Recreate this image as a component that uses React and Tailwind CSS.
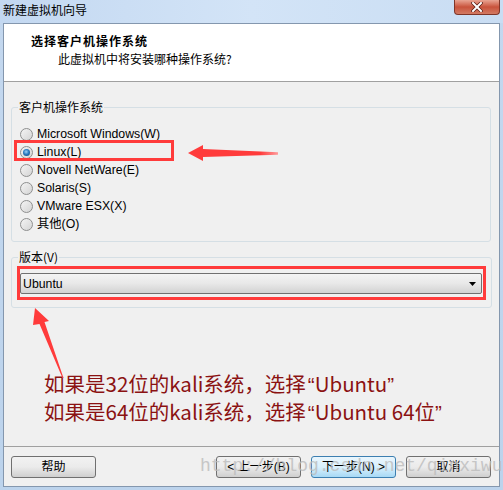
import React from "react";

const ui = { fontFamily: '"Liberation Sans", "Noto Sans CJK SC", sans-serif' };
const cjk = { fontFamily: '"Noto Sans CJK SC", "Liberation Sans", sans-serif' };
const q = { fontFamily: '"Liberation Sans", sans-serif' };

const oses = [
  "Microsoft Windows(W)",
  "Linux(L)",
  "Novell NetWare(E)",
  "Solaris(S)",
  "VMware ESX(X)",
  "其他(O)",
];

function Radio({ checked }) {
  return (
    <span className="relative flex h-[13px] w-[13px] items-center justify-center rounded-full border border-[#8e8f8f] bg-gradient-to-br from-[#f4f4f4] to-[#d4d4d4]">
      {checked && (
        <span className="h-[7px] w-[7px] rounded-full bg-[radial-gradient(circle_at_45%_40%,#9fd4f8_0%,#2a7cc2_45%,#0f3f73_100%)]" />
      )}
    </span>
  );
}

function Button({ children, primary }) {
  return (
    <div
      className={
        "flex h-[22px] w-[85px] items-center justify-center rounded-[3px] border text-[12px] text-black " +
        (primary
          ? "border-[#3c7fb1] bg-gradient-to-b from-[#eaf6fd] via-[#d9f0fc] to-[#a7d9f5]"
          : "border-[#707070] bg-gradient-to-b from-[#f2f2f2] via-[#ebebeb] to-[#cfcfcf]")
      }
      style={ui}
    >
      {children}
    </div>
  );
}

export default function App() {
  return (
    <div className="relative flex h-[490px] w-[503px] flex-col overflow-hidden bg-gradient-to-b from-[#c4d8ef] to-[#bcd3ec]" style={ui}>
      {/* title bar */}
      <div className="flex h-[23px] shrink-0 items-start justify-between bg-gradient-to-r from-[#c3d8f1] via-[#d3e4f7] to-[#c9ddf3] pl-[3px]">
        <span className="mt-[2px] text-[12px] leading-[16px] text-black" style={cjk}>新建虚拟机向导</span>
        <div className="mr-[3px] flex h-[15px] w-[46px] items-center justify-center rounded-b-[4px] border border-t-0 border-[#7f3528] bg-gradient-to-b from-[#e8a493] via-[#c8523b] to-[#d27a63]">
          <svg width="12" height="10" viewBox="0 0 12 10">
            <path d="M2 1 L10 9 M10 1 L2 9" stroke="#5a1e14" strokeWidth="3.4" strokeLinecap="square" />
            <path d="M2 1 L10 9 M10 1 L2 9" stroke="#fff" strokeWidth="2" strokeLinecap="square" />
          </svg>
        </div>
      </div>

      {/* panel */}
      <div className="mx-[3px] mb-[3px] flex flex-1 flex-col border border-[#8497ae] bg-[#f0f0f0]">
        <div className="h-[58px] shrink-0 border-b border-[#a0a0a0] bg-white pl-[27px] pt-[9px]">
          <div className="text-[12px] font-bold leading-[16px] tracking-[1px] text-black" style={cjk}>选择客户机操作系统</div>
          <div className="mt-[2px] pl-[27px] text-[12px] leading-[16px] text-black" style={cjk}>此虚拟机中将安装哪种操作系统?</div>
        </div>

        <fieldset className="ml-[7px] mt-[17px] w-[480px] rounded-[3px] border border-[#d5dfe5] px-[6px] pb-[8px]">
          <legend className="px-[1px] text-[12px] leading-[16px] text-black" style={cjk}>客户机操作系统</legend>
          <div className="flex flex-col pt-[10px]">
            {oses.map((o, i) => (
              <div key={o} className="flex h-[18px] items-center gap-[4px] pl-[2px]">
                <Radio checked={i === 1} />
                <span className="text-[12.3px] leading-[16px] text-black">{o}</span>
              </div>
            ))}
          </div>
        </fieldset>

        <fieldset className="ml-[7px] mt-[7px] w-[480px] rounded-[3px] border border-[#d5dfe5] px-[5px] pb-[7px]">
          <legend className="ml-[1px] px-[1px] text-[12px] leading-[16px] text-black" style={cjk}>版本(V)</legend>
          <div className="mt-[1px] w-[469px] border-[3px] border-[#ff3b3b] pb-[3px] pl-0 pr-[1px] pt-[4px]">
            <div className="flex h-[21px] items-center justify-between rounded-[2px] border border-[#707070] bg-gradient-to-b from-[#f4f4f4] via-[#e8e8e8] to-[#d2d2d2] pl-[2px] pr-[5px]">
              <span className="text-[12.3px] leading-[16px] text-black">Ubuntu</span>
              <svg width="7" height="4" viewBox="0 0 7 4">
                <path d="M0 0 H7 L3.5 4 Z" fill="#000" />
              </svg>
            </div>
          </div>
        </fieldset>

        <div className="ml-[40px] mt-[62px] text-[20.5px] leading-[27px] text-[#8b1212]" style={cjk}>
          <div>如果是32位的kali系统，选择<span style={q} className="pl-[2px]">“</span>Ubuntu<span style={q}>”</span></div>
          <div>如果是64位的kali系统，选择<span style={q} className="pl-[2px]">“</span>Ubuntu 64位<span style={q}>”</span></div>
        </div>

        <div className="mt-auto flex h-[40px] items-start border-t border-[#a0a0a0] pl-[7px] pr-[8px] pt-[9px]">
          <Button>帮助</Button>
          <div className="ml-auto flex gap-[10px]">
            <Button>&lt; 上一步(B)</Button>
            <Button primary>下一步(N) &gt;</Button>
            <Button>取消</Button>
          </div>
        </div>
      </div>

      {/* watermark */}
      <div
        className="pointer-events-none absolute left-[200px] top-[453px] text-[18px] leading-[26px] text-[#bcbcbc] opacity-80"
        style={{ fontFamily: '"Liberation Mono", monospace' }}
      >
        http://blog.csdn.net/qinxiwu
      </div>

      {/* annotations */}
      <svg className="pointer-events-none absolute left-0 top-0" width="503" height="490" viewBox="0 0 503 490">
        <defs>
          <linearGradient id="fade" x1="0" x2="1" y1="0" y2="0">
            <stop offset="0" stopColor="#ff3b3b" />
            <stop offset="0.8" stopColor="#ff3b3b" />
            <stop offset="1" stopColor="#ff9a9a" />
          </linearGradient>
        </defs>
        <rect x="15.5" y="141.5" width="157" height="18" fill="none" stroke="#ff3b3b" strokeWidth="3" />
        <polygon points="188,153 203,145 203,149 278,152.3 278,154.7 203,157 203,161" fill="url(#fade)" />
        <polygon points="35,308 49,321 44.5,322 63.5,378 62.5,378 39.5,324 33,325" fill="#ff3b3b" />
      </svg>
    </div>
  );
}
